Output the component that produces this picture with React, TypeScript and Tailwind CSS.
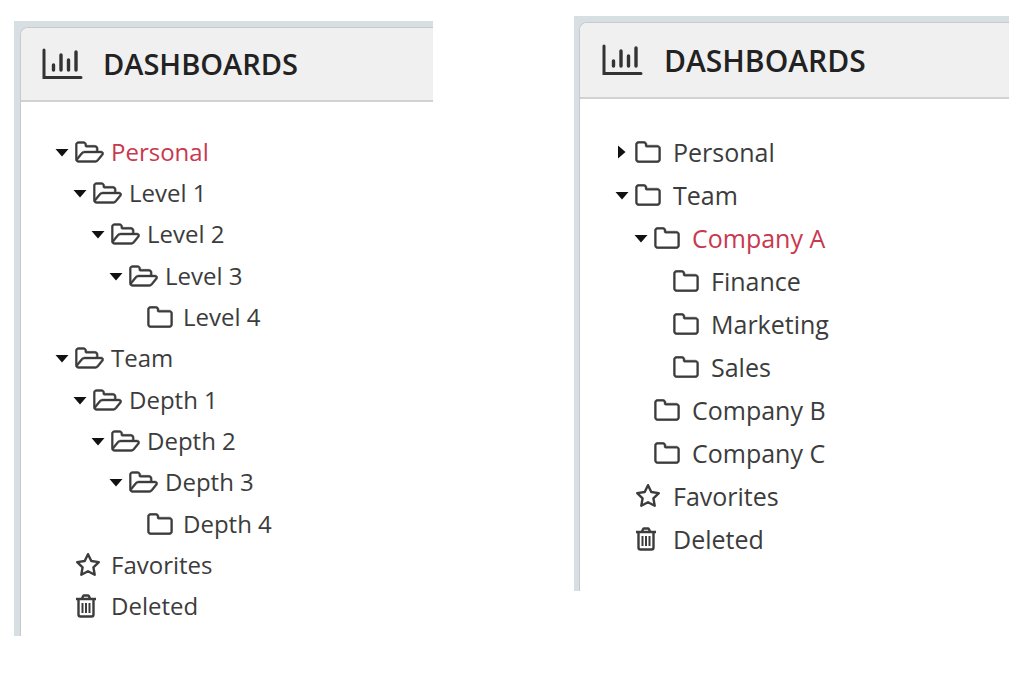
import { useState } from "react";
import { clsx } from "clsx";

type Icon = "open" | "folder" | "star" | "trash";

type TreeItem = {
  label: string;
  depth: number;
  icon: Icon;
  caret?: "down" | "right";
};

const levelsTree: TreeItem[] = [
  { label: "Personal", depth: 0, icon: "open", caret: "down" },
  { label: "Level 1", depth: 1, icon: "open", caret: "down" },
  { label: "Level 2", depth: 2, icon: "open", caret: "down" },
  { label: "Level 3", depth: 3, icon: "open", caret: "down" },
  { label: "Level 4", depth: 4, icon: "folder" },
  { label: "Team", depth: 0, icon: "open", caret: "down" },
  { label: "Depth 1", depth: 1, icon: "open", caret: "down" },
  { label: "Depth 2", depth: 2, icon: "open", caret: "down" },
  { label: "Depth 3", depth: 3, icon: "open", caret: "down" },
  { label: "Depth 4", depth: 4, icon: "folder" },
  { label: "Favorites", depth: 0, icon: "star" },
  { label: "Deleted", depth: 0, icon: "trash" },
];

const companyTree: TreeItem[] = [
  { label: "Personal", depth: 0, icon: "folder", caret: "right" },
  { label: "Team", depth: 0, icon: "folder", caret: "down" },
  { label: "Company A", depth: 1, icon: "folder", caret: "down" },
  { label: "Finance", depth: 2, icon: "folder" },
  { label: "Marketing", depth: 2, icon: "folder" },
  { label: "Sales", depth: 2, icon: "folder" },
  { label: "Company B", depth: 1, icon: "folder" },
  { label: "Company C", depth: 1, icon: "folder" },
  { label: "Favorites", depth: 0, icon: "star" },
  { label: "Deleted", depth: 0, icon: "trash" },
];

function ItemIcon({ icon }: { icon: Icon }) {
  if (icon === "open") {
    return (
      <svg viewBox="-20 190 1949 1448" className="w-[29px] h-[22px]" fill="currentColor" stroke="currentColor" strokeWidth="30" aria-hidden="true">
        <path d="M1781 1013q0-35-53-35h-1088q-40 0-85.500 21.500t-71.500 52.500l-294 363q-18 24-18 40 0 35 53 35h1088q40 0 86-22t71-53l294-363q18-22 18-39zm-1141-163h768v-160q0-40-28-68t-68-28h-576q-40 0-68-28t-28-68v-64q0-40-28-68t-68-28h-320q-40 0-68 28t-28 68v853l256-315q44-53 116-87.500t140-34.500zm1269 163q0 62-46 120l-295 363q-43 53-116 87.500t-140 34.500h-1088q-92 0-158-66t-66-158v-960q0-92 66-158t158-66h320q92 0 158 66t66 158v32h544q92 0 158 66t66 158v160h192q54 0 99 24.500t67 70.500q15 32 15 68z" />
      </svg>
    );
  }
  if (icon === "folder") {
    return (
      <svg viewBox="-20 -20 1704 1448" className="w-[26px] h-[22px]" fill="currentColor" stroke="currentColor" strokeWidth="30" aria-hidden="true">
        <path d="M1536 1184v-704q0-40-28-68t-68-28h-704q-40 0-68-28t-28-68v-64q0-40-28-68t-68-28h-320q-40 0-68 28t-28 68v960q0 40 28 68t68 28h1216q40 0 68-28t28-68zm128-704v704q0 92-66 158t-158 66h-1216q-92 0-158-66t-66-158v-960q0-92 66-158t158-66h320q92 0 158 66t66 158v32h672q92 0 158 66t66 158z" />
      </svg>
    );
  }
  if (icon === "star") {
    return (
      <svg viewBox="0 0 26 25" className="w-[26px] h-[25px]" fill="none" stroke="currentColor" strokeWidth="2.400" strokeLinejoin="round" aria-hidden="true">
        <path d="M13 2.200l3.300 6.800 7.500 1.100-5.400 5.200 1.300 7.500-6.700-3.600-6.700 3.600 1.300-7.500-5.400-5.200 7.500-1.100z" />
      </svg>
    );
  }
  return (
    <svg viewBox="0 0 22 24" className="w-[22px] h-[24px]" fill="none" stroke="currentColor" strokeWidth="2.400" aria-hidden="true">
      <path d="M1 5h20M3.500 5v15.500q0 2 2 2h11q2 0 2-2V5M7 4.500l1-2.200q.4-.8 1.200-.8h3.600q.8 0 1.200.8l1 2.200" />
      <path d="M7.500 9v10M11 9v10M14.500 9v10" strokeWidth="2" />
    </svg>
  );
}

function Caret({ direction }: { direction: "down" | "right" }) {
  return (
    <svg viewBox="0 0 14 14" className="size-[14px]" fill="#111" aria-hidden="true">
      {direction === "down" ? <path d="M.5 4h13L7 11.500z" /> : <path d="M3 .5v13l7.500-6.500z" />}
    </svg>
  );
}

function ChartIcon() {
  return (
    <svg viewBox="0 0 42 32" className="w-[42px] h-[32px]" fill="none" stroke="#333" strokeLinecap="round" aria-hidden="true">
      <path d="M3 2v27.500h37" strokeWidth="3" />
      <path d="M12.500 17v5M20 7v15M27.500 12v10M35 4v18" strokeWidth="3.400" />
    </svg>
  );
}

type PanelProps = {
  items: TreeItem[];
  initial: string;
  indent: number;
  large?: boolean;
};

function DashboardPanel({ items, initial, indent, large }: PanelProps) {
  const [selected, setSelected] = useState(initial);

  return (
    <section className={clsx("bg-[#d8dfe3]", large ? "pt-[6px] pl-[5px]" : "mt-[5px] pt-[6px] pl-[6px]")}>
      <div className={clsx("bg-white border-t border-l border-[#c6cacc] rounded-tl-lg overflow-hidden", large ? "pb-[31px]" : "pb-[9px]")}>
        <header
          className={clsx(
            "flex items-center bg-[#f0f0f0] border-b-2 border-[#d2d2d2]",
            large ? "h-[76px] pl-[21px] gap-[21px]" : "h-[74px] pl-[20px] gap-[20px]"
          )}
        >
          <ChartIcon />
          <h2 className={clsx("font-semibold text-[#222]", large ? "text-[30px]" : "text-[29px]")}>DASHBOARDS</h2>
        </header>

        <ul className={clsx("grid auto-rows-fr", large ? "mt-[31px] h-[430px] pl-[35px] text-[25px]" : "mt-[29px] h-[496px] pl-[34px] text-[24px]")}>
          {items.map((item) => (
            <li key={item.label} className="flex items-center" style={{ paddingLeft: item.depth * indent }}>
              <span className="w-[20px] shrink-0 flex items-center">
                {item.caret && (
                  <button type="button" aria-label={`Toggle ${item.label}`} className="flex">
                    <Caret direction={item.caret} />
                  </button>
                )}
              </span>
              <a
                href="#"
                onClick={() => setSelected(item.label)}
                className={clsx("flex items-center leading-8", selected === item.label ? "text-[#c8394f]" : "text-[#3c3c3c]")}
              >
                <span className={clsx("shrink-0 text-[#3c3c3c]", large ? "w-[38px]" : "w-[36px]")}>
                  <ItemIcon icon={item.icon} />
                </span>
                {item.label}
              </a>
            </li>
          ))}
        </ul>
      </div>
    </section>
  );
}

export default function App() {
  return (
    <main className="min-h-screen bg-white pt-[16px] pl-[14px] pr-[15px] font-['Open_Sans','Noto_Sans',sans-serif]">
      <div className="grid grid-cols-[419fr_435fr] gap-[141px] items-start">
        <DashboardPanel items={levelsTree} initial="Personal" indent={18} />
        <DashboardPanel items={companyTree} initial="Company A" indent={19} large />
      </div>
    </main>
  );
}
